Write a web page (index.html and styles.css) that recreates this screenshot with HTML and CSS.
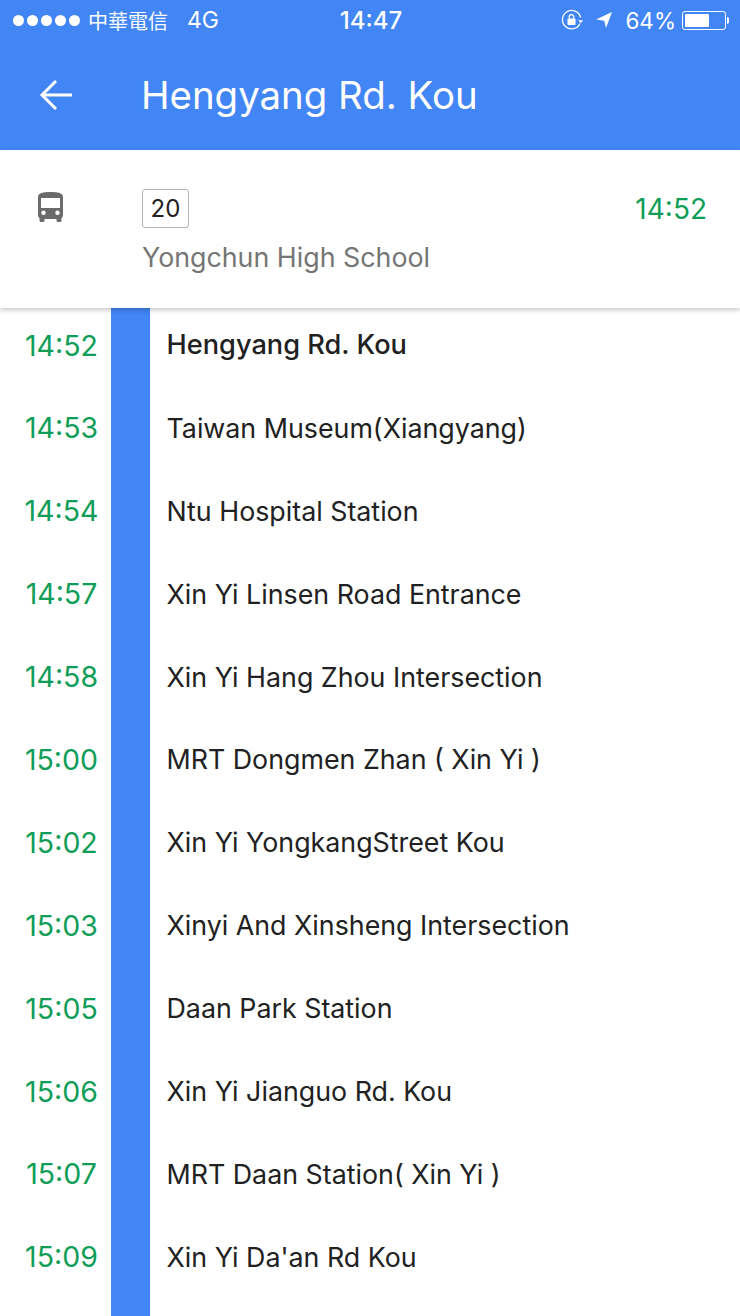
FILE: index.html
```html
<!DOCTYPE html>
<html lang="en">
<head>
    <meta charset="UTF-8">
    <meta name="viewport" content="width=device-width, initial-scale=1.0">
    <title>Hengyang Rd. Kou</title>
    <link rel="stylesheet" href="styles.css">
</head>
<body>
    <div class="status-bar">
        <div class="status-left">
            <div class="signal">
                <span class="dot"></span><span class="dot"></span><span class="dot"></span><span class="dot"></span><span class="dot"></span>
            </div>
            <span class="carrier">中華電信</span>
            <span class="network">4G</span>
        </div>
        <div class="status-time">14:47</div>
        <div class="status-right">
            <svg class="lock-icon" width="24" height="24" viewBox="0 0 24 24" fill="none" stroke="white" stroke-width="1.3">
                <path d="M20 15.5A9.2 9.2 0 1 1 20.6 9.5"/>
                <path d="M18.2 12.2h5l-2.500 3z" fill="white" stroke="none"/>
                <rect x="7.500" y="10.500" width="8" height="6.500" rx="0.800" fill="white" stroke="none"/>
                <path d="M9.300 10.500V8.800a2.200 2.200 0 0 1 4.400 0v1.700"/>
            </svg>
            <svg class="arrow-icon" width="18" height="18" viewBox="0 0 18 18">
                <path d="M1 8.500L17 1 11 17 9.200 9.800z" fill="white"/>
            </svg>
            <span class="battery-pct">64%</span>
            <div class="battery">
                <div class="battery-fill"></div>
            </div>
            <div class="battery-tip"></div>
        </div>
    </div>

    <div class="app-bar">
        <svg class="back-icon" width="34" height="32" viewBox="0 0 34 32" fill="none" stroke="white" stroke-width="3">
            <path d="M33 16H3"/>
            <path d="M17 2L3 16l14 14"/>
        </svg>
        <h1>Hengyang Rd. Kou</h1>
    </div>

    <div class="route-card">
        <svg class="bus-icon" width="25" height="30" viewBox="0 0 25 30">
            <path fill="#6b6b6b" fill-rule="evenodd" d="M0 5C0 1 5 0 12.500 0S25 1 25 5v18c0 1.300-.600 2.300-1.500 3v2.500c0 .800-.700 1.500-1.500 1.500h-2c-.800 0-1.500-.700-1.500-1.500V27h-12v1.500c0 .800-.700 1.500-1.500 1.500H3c-.800 0-1.500-.700-1.500-1.500V26C.600 25.300 0 24.300 0 23zM3 6v10h19V6zM5.500 23a2.200 2.200 0 1 0 0-4.400 2.200 2.200 0 0 0 0 4.400zm14 0a2.200 2.200 0 1 0 0-4.400 2.200 2.200 0 0 0 0 4.400z"/>
        </svg>
        <div class="route-info">
            <span class="route-badge">20</span>
            <div class="route-dest">Yongchun High School</div>
        </div>
        <div class="route-time">14:52</div>
    </div>

    <div class="stops">
        <div class="stop current">
            <div class="stop-time">14:52</div>
            <div class="stop-line"></div>
            <div class="stop-name">Hengyang Rd. Kou</div>
        </div>
        <div class="stop">
            <div class="stop-time">14:53</div>
            <div class="stop-line"></div>
            <div class="stop-name">Taiwan Museum(Xiangyang)</div>
        </div>
        <div class="stop">
            <div class="stop-time">14:54</div>
            <div class="stop-line"></div>
            <div class="stop-name">Ntu Hospital Station</div>
        </div>
        <div class="stop">
            <div class="stop-time">14:57</div>
            <div class="stop-line"></div>
            <div class="stop-name">Xin Yi Linsen Road Entrance</div>
        </div>
        <div class="stop">
            <div class="stop-time">14:58</div>
            <div class="stop-line"></div>
            <div class="stop-name">Xin Yi Hang Zhou Intersection</div>
        </div>
        <div class="stop">
            <div class="stop-time">15:00</div>
            <div class="stop-line"></div>
            <div class="stop-name">MRT Dongmen Zhan ( Xin Yi )</div>
        </div>
        <div class="stop">
            <div class="stop-time">15:02</div>
            <div class="stop-line"></div>
            <div class="stop-name">Xin Yi YongkangStreet Kou</div>
        </div>
        <div class="stop">
            <div class="stop-time">15:03</div>
            <div class="stop-line"></div>
            <div class="stop-name">Xinyi And Xinsheng Intersection</div>
        </div>
        <div class="stop">
            <div class="stop-time">15:05</div>
            <div class="stop-line"></div>
            <div class="stop-name">Daan Park Station</div>
        </div>
        <div class="stop">
            <div class="stop-time">15:06</div>
            <div class="stop-line"></div>
            <div class="stop-name">Xin Yi Jianguo Rd. Kou</div>
        </div>
        <div class="stop">
            <div class="stop-time">15:07</div>
            <div class="stop-line"></div>
            <div class="stop-name">MRT Daan Station( Xin Yi )</div>
        </div>
        <div class="stop">
            <div class="stop-time">15:09</div>
            <div class="stop-line"></div>
            <div class="stop-name">Xin Yi Da'an Rd Kou</div>
        </div>
        <div class="stops-end">
            <div class="stop-line"></div>
        </div>
    </div>
</body>
</html>
```

FILE: styles.css
```css
body {
    font-family: Inter, "Noto Sans CJK TC", sans-serif;
    margin: 0;
    background-color: white;
    color: #212121;
}

.status-bar {
    display: grid;
    grid-template-columns: 1fr auto 1fr;
    align-items: center;
    height: 40px;
    padding: 0 11px 0 13px;
    background-color: #4285f4;
    color: white;
}

.status-left {
    display: flex;
    align-items: center;
}

.signal {
    display: flex;
    gap: 3px;
    margin-right: 8px;
}

.dot {
    width: 11px;
    height: 11px;
    border-radius: 50%;
    background-color: white;
}

.carrier {
    font-size: 20px;
    margin-right: 19px;
}

.network {
    font-size: 23px;
}

.status-time {
    font-weight: 500;
    font-size: 24px;
}

.status-right {
    display: flex;
    align-items: center;
    justify-content: flex-end;
}

.lock-icon {
    margin-right: 11px;
}

.arrow-icon {
    margin-right: 12px;
}

.battery-pct {
    margin-right: 6px;
    font-size: 22.500px;
}

.battery {
    width: 44px;
    height: 19px;
    padding: 2px;
    box-sizing: border-box;
    border: 1px solid white;
    border-radius: 3px;
}

.battery-fill {
    width: 64%;
    height: 100%;
    background-color: white;
    border-radius: 1px;
}

.battery-tip {
    width: 2px;
    height: 7px;
    margin-left: 1px;
    background-color: white;
    border-radius: 0 2px 2px 0;
}

.app-bar {
    display: flex;
    align-items: center;
    height: 110px;
    padding-left: 39px;
    box-sizing: border-box;
    background-color: #4285f4;
    color: white;
}

.back-icon {
    margin-right: 68px;
    flex-shrink: 0;
}

.app-bar h1 {
    margin: 0;
    font-size: 38.400px;
    font-weight: 400;
}

.route-card {
    position: relative;
    display: flex;
    align-items: flex-start;
    height: 158px;
    box-sizing: border-box;
    padding: 39px 33px 0 38px;
    background-color: white;
    box-shadow: 0 2px 5px rgba(0, 0, 0, 0.22);
}

.bus-icon {
    margin-right: 79px;
    margin-top: 3px;
    flex-shrink: 0;
}

.route-info {
    flex: 1;
}

.route-badge {
    display: inline-block;
    width: 47px;
    height: 39px;
    line-height: 38px;
    box-sizing: border-box;
    text-align: center;
    border: 1.5px solid #b4b4b4;
    border-radius: 3px;
    font-size: 24px;
    color: #212121;
}

.route-dest {
    margin-top: 9px;
    font-size: 26.800px;
    line-height: 40px;
    color: #757575;
}

.route-time {
    font-size: 28px;
    line-height: 40px;
    color: #0f9d58;
}

.stops {
    display: flex;
    flex-direction: column;
    height: 1008px;
}

.stop {
    display: flex;
    flex: none;
    height: 82.900px;
}

.stops-end {
    display: flex;
    flex: 1;
    padding-left: 111px;
}

.stop-time {
    width: 75px;
    margin-left: 24px;
    margin-right: 12px;
    padding-top: 19.500px;
    line-height: 36px;
    text-align: center;
    font-size: 28.500px;
    color: #0f9d58;
}

.stop-line {
    width: 39px;
    background-color: #4285f4;
}

.stop-name {
    margin-left: 16.500px;
    padding-top: 19px;
    line-height: 36px;
    font-size: 26.800px;
}

.current .stop-name {
    font-weight: 500;
    font-size: 27.200px;
}
```
